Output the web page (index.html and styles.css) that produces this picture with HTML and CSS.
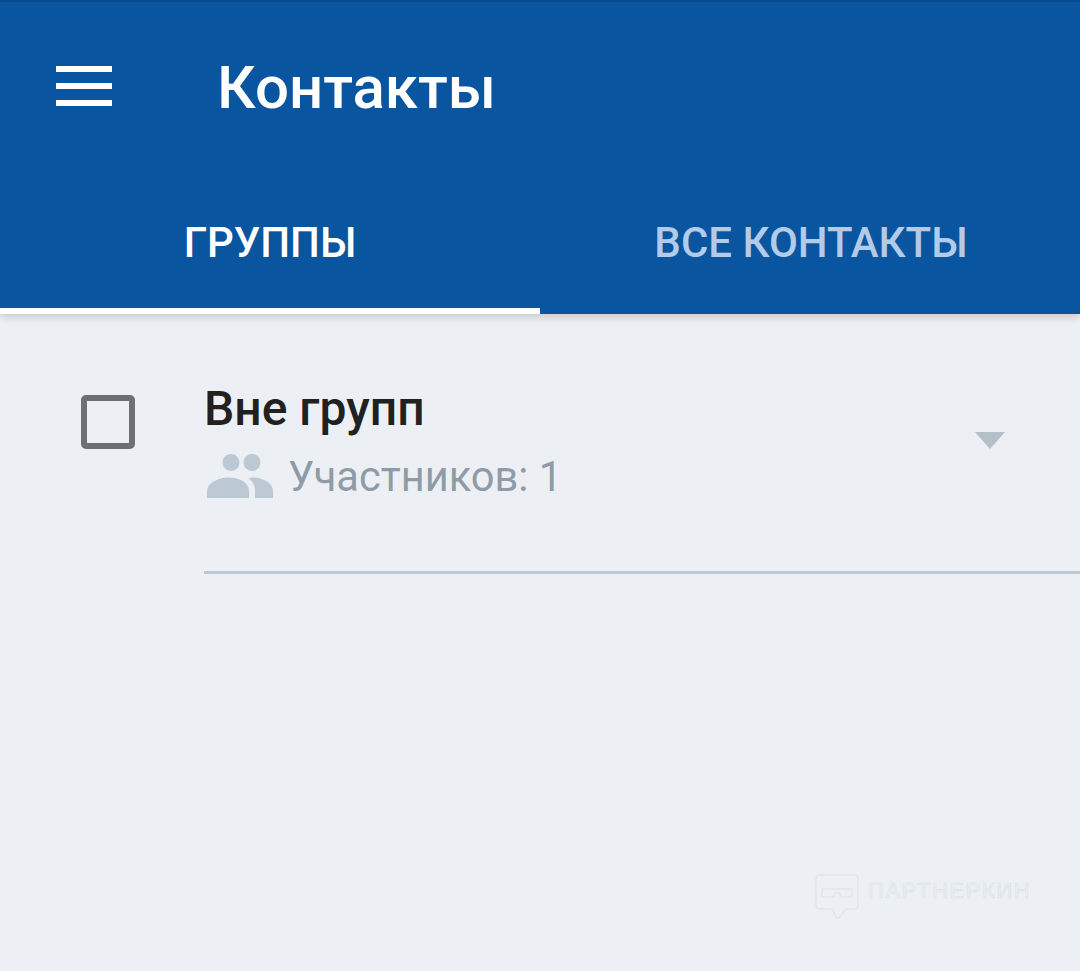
FILE: index.html
```html
<!DOCTYPE html>
<html>
<head>
    <meta charset="utf-8">
    <title>Контакты</title>
    <link rel="stylesheet" href="styles.css">
</head>
<body>
    <header class="app-header">
        <div class="toolbar">
            <div class="menu-icon">
                <span></span>
                <span></span>
                <span></span>
            </div>
            <h1 class="title">Контакты</h1>
        </div>
        <nav class="tabs">
            <div class="tab active">ГРУППЫ</div>
            <div class="tab second">ВСЕ КОНТАКТЫ</div>
        </nav>
    </header>

    <section class="group-list">
        <div class="group-row">
            <div class="checkbox"></div>
            <div class="group-info">
                <div class="group-name">Вне групп</div>
                <div class="group-meta">
                    <svg class="people-icon" viewBox="0 0 66 44" width="66" height="44">
                        <circle cx="24" cy="8.500" r="8.500"/>
                        <circle cx="45" cy="8.500" r="8.500"/>
                        <path d="M0 44V37C0 29 11 23.500 22 23.500C33 23.500 42 29 42 37V44Z"/>
                        <path d="M48 44V36C48 31 45.500 27 41.500 24.500C43 24 44.500 23.500 46 23.500C56 23.500 66 29 66 37V44Z"/>
                    </svg>
                    <span>Участников: 1</span>
                </div>
            </div>
            <div class="arrow"></div>
        </div>
    </section>

    <div class="watermark">
        <svg viewBox="0 0 44 46" width="44" height="46">
            <path d="M3 1H40Q43 1 43 4V32Q43 35 40 35H31L24 44Q22 45 21 43L17 35H4Q1 35 1 32V4Q1 1 3 1Z"/>
            <path d="M7 15H37V21Q37 23 35 23H27Q25 23 25 21V19H19V21Q19 23 17 23H9Q7 23 7 21Z"/>
        </svg>
        <span>ПАРТНЕРКИН</span>
    </div>
</body>
</html>
```

FILE: styles.css
```css
* {
    box-sizing: border-box;
}

html, body {
    height: 100%;
}

body {
    margin: 0;
    position: relative;
    overflow: hidden;
    background: #ecf0f4;
    font-family: Roboto, "Liberation Sans", sans-serif;
}

.app-header {
    height: 314px;
    display: flex;
    flex-direction: column;
    background: #0a559f;
    border-top: 2px solid #084a8e;
    box-shadow: 0 3px 8px rgba(0,0,0,0.16);
}

.toolbar {
    height: 172px;
    display: flex;
    align-items: flex-start;
    padding: 64px 0 0 56px;
}

.menu-icon {
    width: 56px;
    height: 40px;
    display: flex;
    flex-direction: column;
    justify-content: space-between;
    margin-right: 105px;
}

.menu-icon span {
    height: 6px;
    background: #fff;
}

.title {
    margin: -15px 0 0;
    font-size: 60px;
    line-height: 74px;
    font-weight: 500;
    color: #fff;
}

.tabs {
    flex-grow: 1;
    display: flex;
}

.tab {
    flex: 0 0 50%;
    padding-top: 44px;
    text-align: center;
    font-size: 42px;
    line-height: 50px;
    font-weight: 500;
    color: #b1cbe8;
}

.tab.second {
    padding-left: 2px;
}

.tab.active {
    color: #fff;
    border-bottom: 6px solid #fff;
}

.group-row {
    display: flex;
    align-items: flex-start;
    padding: 0 0 0 81px;
    position: relative;
}

.checkbox {
    width: 54px;
    height: 54px;
    margin-top: 81px;
    margin-right: 69px;
    border: 6px solid #6c7074;
    border-radius: 5px;
}

.group-info {
    flex-grow: 1;
    height: 260px;
    padding-top: 68px;
    border-bottom: 3px solid #bcc8d3;
}

.group-name {
    font-size: 48px;
    line-height: 54px;
    font-weight: 500;
    color: #212121;
}

.group-meta {
    display: flex;
    align-items: center;
    height: 50px;
    margin-top: 15px;
    padding-left: 3px;
    font-size: 41.600px;
    color: #8f9ca8;
}

.people-icon {
    fill: #bcc8d3;
    margin-right: 15px;
}

.arrow {
    position: absolute;
    top: 118px;
    right: 75px;
    width: 0;
    height: 0;
    border-left: 15px solid transparent;
    border-right: 15px solid transparent;
    border-top: 17px solid #b5bfc8;
}

/* watermark lies over the page background */
.watermark {
    position: absolute;
    left: 815px;
    top: 874px;
    display: flex;
    align-items: flex-start;
    gap: 9px;
}

.watermark svg {
    fill: none;
    stroke: #dde1e5;
    stroke-width: 1;
}

.watermark span {
    margin-top: 5px;
    font-family: "Liberation Sans", sans-serif;
    font-size: 22px;
    line-height: 24px;
    letter-spacing: 1.600px;
    color: transparent;
    -webkit-text-stroke: 0.5px #d8dde1;
}
```
